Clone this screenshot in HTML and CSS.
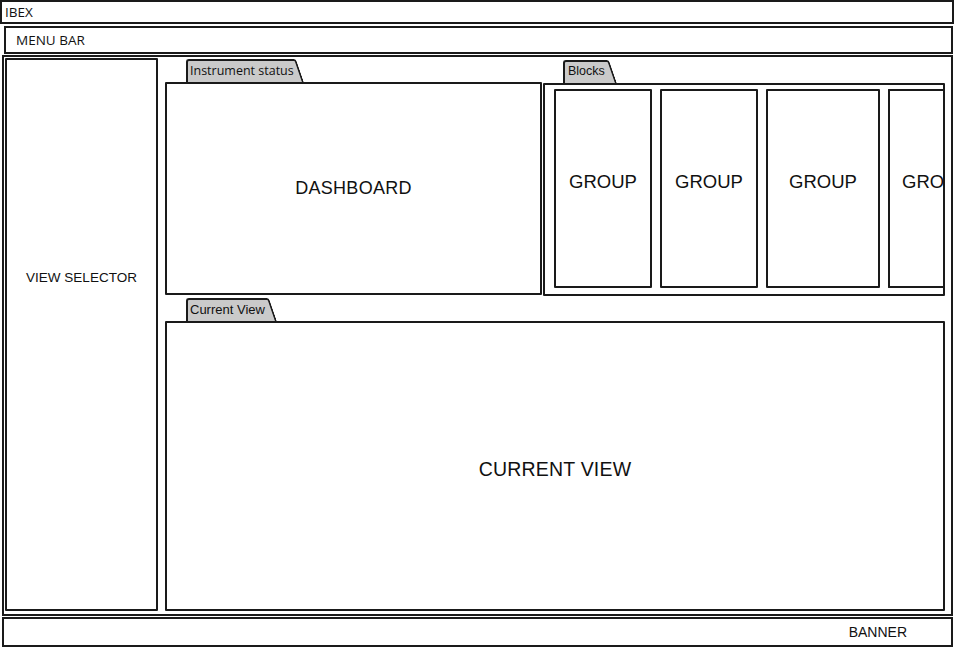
FILE: index.html
```html
<!DOCTYPE html>
<html>
<head>
<meta charset="utf-8">
<title>IBEX wireframe</title>
<link rel="stylesheet" href="styles.css">
</head>
<body>
<div class="app">
  <div class="titlebar">IBEX</div>
  <div class="menubar">MENU BAR</div>
  <div class="main">
    <div class="sidebar"><span class="sidebar-label">VIEW SELECTOR</span></div>
    <div class="content">
      <div class="top-row">
        <section class="panel panel-dash">
          <div class="tab-row"><span class="tab sketch">Instrument status</span></div>
          <div class="box dashboard">DASHBOARD</div>
        </section>
        <section class="panel panel-blocks">
          <div class="tab-row tab-row-blocks"><span class="tab tab-blocks">Blocks</span></div>
          <div class="box blocks">
            <div class="group">GROUP</div>
            <div class="group">GROUP</div>
            <div class="group group-wide">GROUP</div>
            <div class="group">GROUP</div>
          </div>
        </section>
      </div>
      <section class="panel panel-current">
        <div class="tab-row tab-row-current"><span class="tab">Current View</span></div>
        <div class="box current">CURRENT VIEW</div>
      </section>
    </div>
  </div>
  <div class="banner">BANNER</div>
</div>
</body>
</html>
```
FILE: styles.css
```css
html, body {
  margin: 0;
  padding: 0;
  background: #ffffff;
}

body {
  font-family: "Liberation Sans", Arial, sans-serif;
  color: #111111;
}

.app {
  width: 955px;
  height: 648px;
  display: flex;
  flex-direction: column;
  overflow: hidden;
}

.titlebar {
  box-sizing: border-box;
  height: 24px;
  margin-right: 1px;
  padding-left: 3px;
  border: 2px solid #1a1a1a;
  font-family: "Open Sans", sans-serif;
  font-size: 13.5px;
  line-height: 20px;
}

.menubar {
  box-sizing: border-box;
  height: 28px;
  margin: 2px 2px 0 4px;
  padding-left: 10px;
  border: 2px solid #1a1a1a;
  font-family: "Open Sans", sans-serif;
  font-size: 13.5px;
  line-height: 24px;
}

.main {
  box-sizing: border-box;
  height: 561px;
  margin: 1px 2px 0 2px;
  border: 2px solid #1a1a1a;
  display: flex;
  background: #ffffff;
}

.sidebar {
  box-sizing: border-box;
  width: 153px;
  height: 553px;
  margin: 1px 0 0 1px;
  border: 2px solid #1a1a1a;
  border-radius: 1px;
  display: flex;
  justify-content: center;
  align-items: flex-start;
  padding-top: 210px;
}

.sidebar-label {
  font-size: 13.5px;
  line-height: 16px;
}

.content {
  margin-left: 7px;
  padding-top: 2px;
  width: 780px;
  display: flex;
  flex-direction: column;
}

.top-row {
  display: flex;
  height: 237px;
}

.panel {
  display: flex;
  flex-direction: column;
}

.panel-dash {
  width: 377px;
}

.panel-blocks {
  width: 402px;
  margin-left: 1px;
}

.panel-current {
  margin-top: 1px;
  width: 780px;
}

.tab-row {
  position: relative;
  z-index: 0;
  height: 23px;
  display: flex;
  align-items: flex-end;
}

.tab-row-blocks {
  height: 24px;
}

.tab-row-current {
  height: 24px;
}

.tab {
  position: relative;
  box-sizing: border-box;
  height: 23px;
  margin-left: 21px;
  padding: 0 2px 0 2px;
  background: #cacaca;
  border: 2px solid #1a1a1a;
  border-right: 0;
  border-bottom: 0;
  border-top-left-radius: 3px;
  font-size: 13px;
  line-height: 19px;
  white-space: nowrap;
}

.tab::after {
  content: "";
  position: absolute;
  z-index: -1;
  top: -2px;
  bottom: 0;
  left: calc(100% - 12px);
  width: 12px;
  background: #cacaca;
  border-top: 2px solid #1a1a1a;
  border-right: 2px solid #1a1a1a;
  border-top-right-radius: 3px;
  transform: skewX(19deg);
  transform-origin: 0 0;
}

.tab.sketch {
  font-family: "Open Sans", sans-serif;
  font-size: 12.5px;
  padding-right: 0;
}

.tab-blocks {
  margin-left: 20px;
  padding-left: 3px;
  font-size: 12.5px;
}

.box {
  box-sizing: border-box;
  border: 2px solid #1a1a1a;
  border-radius: 1px;
  background: #ffffff;
}

.dashboard {
  height: 213px;
  display: flex;
  justify-content: center;
  align-items: center;
  font-size: 18px;
  letter-spacing: 0.3px;
}

.blocks {
  height: 213px;
  display: flex;
  gap: 8px;
  padding: 4px 0 0 9px;
  overflow: hidden;
}

.group {
  box-sizing: border-box;
  flex: 0 0 98px;
  height: 199px;
  border: 2px solid #1a1a1a;
  border-radius: 1px;
  display: flex;
  justify-content: center;
  align-items: center;
  padding-bottom: 14px;
  font-size: 18.5px;
  white-space: nowrap;
  overflow: hidden;
}

.group:last-child {
  justify-content: flex-start;
  padding-left: 12px;
  border-right: 0;
}

.group-wide {
  flex-basis: 114px;
}

.current {
  height: 290px;
  display: flex;
  justify-content: center;
  align-items: center;
  padding-top: 7px;
  font-size: 19.5px;
  letter-spacing: 0.2px;
}

.banner {
  box-sizing: border-box;
  height: 30px;
  margin: 1px 2px 0 2px;
  border: 2px solid #1a1a1a;
  display: flex;
  justify-content: flex-end;
  align-items: center;
  padding-right: 44px;
  font-size: 14px;
}
```
